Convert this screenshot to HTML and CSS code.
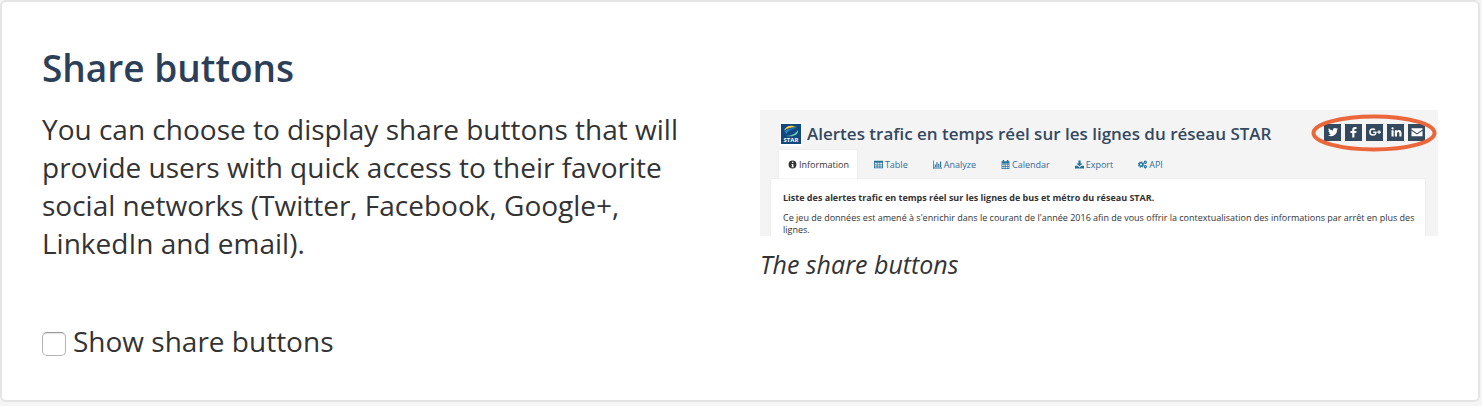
FILE: index.html
```html
<!DOCTYPE html>
<html lang="en">
<head>
<meta charset="utf-8">
<title>Share buttons</title>
<link rel="stylesheet" href="styles.css">
</head>
<body>
<main class="card">
  <section class="intro">
    <h2 class="heading">Share buttons</h2>
    <p class="description">You can choose to display share buttons that will provide users with quick access to their favorite social networks (Twitter, Facebook, Google+, LinkedIn and email).</p>
    <label class="option"><input class="checkbox" type="checkbox"><span>Show share buttons</span></label>
  </section>
  <figure class="example">
    <div class="preview" lang="fr">
      <header class="preview-header">
        <svg class="logo" viewBox="0 0 22 24" aria-hidden="true">
          <rect width="22" height="24" fill="#fff"/>
          <rect x="1" y="2" width="20" height="20" fill="#104880"/>
          <path d="M4 8.500C6 3.500 11 2.500 17 5.500C12 5 8.500 5.800 4 8.500Z" fill="#f5c94c"/>
          <path d="M4.500 9.500C7 6.300 12 5.800 16.500 6.300C11 7.300 8 8.500 6.500 12Z" fill="#2d86bd"/>
          <path d="M18 8C19 12 14 15.500 6 14C12 13.600 16 11.500 18 8Z" fill="#71c9ae"/>
          <text class="logo-text" x="11" y="20" text-anchor="middle">STAR</text>
        </svg>
        <h3 class="preview-title">Alertes trafic en temps réel sur les lignes du réseau STAR</h3>
        <div class="share">
          <button class="share-button" type="button" aria-label="Twitter"><svg viewBox="0 0 24 24"><path d="M22 5.800c-.8.400-1.600.6-2.400.7.900-.5 1.500-1.300 1.800-2.300-.8.500-1.700.8-2.600 1A4.100 4.100 0 0 0 11.800 9C8.400 8.800 5.400 7.200 3.400 4.700a4.100 4.100 0 0 0 1.300 5.500c-.7 0-1.300-.2-1.900-.5 0 2 1.400 3.700 3.300 4.100-.6.200-1.200.2-1.900.1.500 1.600 2 2.800 3.900 2.800A8.300 8.300 0 0 1 2 18.400 11.700 11.700 0 0 0 20 8c.8-.6 1.500-1.300 2-2.200Z"/></svg></button>
          <button class="share-button" type="button" aria-label="Facebook"><svg viewBox="0 0 24 24"><path d="M17 2v4h-2.500c-1.400 0-1.700.7-1.700 1.800V10H17l-.6 4h-3.600v9H8.500v-9H5v-4h3.500V7c0-3.400 2-5.200 5-5.200 1.500 0 2.900.1 3.500.2Z"/></svg></button>
          <button class="share-button" type="button" aria-label="Google+"><svg viewBox="0 0 24 24"><path d="M8 4.500c2 0 3.700.7 5 1.900L10.900 8.500A4.200 4.200 0 0 0 8 7.400 4.600 4.600 0 0 0 8 16.700c2.900 0 4-2 4.200-3.100H8v-2.800h7.200c.6 4.300-1.800 8.900-7.200 8.900A7.600 7.600 0 0 1 8 4.500ZM19 8.500h2.300V11H24v2.300h-2.700V16H19v-2.700h-2.600V11H19Z"/></svg></button>
          <button class="share-button" type="button" aria-label="LinkedIn"><svg viewBox="0 0 24 24"><path d="M3 8.500h4.300V21H3ZM5.200 2.500a2.200 2.200 0 1 1 0 4.500 2.200 2.200 0 0 1 0-4.500ZM9.700 8.500h4.100v1.900c.8-1.300 2-2.200 4-2.200 3 0 5.200 2 5.200 6V21h-4.300v-6.400c0-1.700-.6-2.800-2.100-2.800-1.800 0-2.500 1.300-2.500 2.900V21H9.700Z"/></svg></button>
          <button class="share-button" type="button" aria-label="Email"><svg viewBox="0 0 24 24"><path d="M1 4.500h22v2.300L12 14.500 1 6.800ZM1 9.300l11 7.700 11-7.700v11H1Z"/></svg></button>
          <svg class="highlight" viewBox="0 0 126 38" aria-hidden="true"><ellipse cx="63" cy="19" rx="60.500" ry="16.500" fill="none" stroke="#eb673b" stroke-width="4"/></svg>
        </div>
      </header>
      <nav class="tabs">
        <a class="tab tab-active" href="#information"><svg viewBox="0 0 16 16"><path fill-rule="evenodd" d="M8 1a7 7 0 1 1 0 14A7 7 0 0 1 8 1ZM7 3v2.500h2.500V3ZM6 7v1.500h1V11.500H6V13h4.500v-1.500h-1V7Z"/></svg>Information</a>
        <a class="tab" href="#table"><svg viewBox="0 0 16 16"><path fill-rule="evenodd" d="M0 1.500h16v13H0ZM1.500 5v2h3.500V5ZM6.300 5v2h3.500V5ZM11 5v2h3.500V5ZM1.500 8.200v2h3.500v-2ZM6.300 8.200v2h3.500v-2ZM11 8.200v2h3.500v-2ZM1.500 11.400v1.800h3.500v-1.800ZM6.300 11.400v1.800h3.500v-1.800ZM11 11.400v1.800h3.500v-1.800Z"/></svg>Table</a>
        <a class="tab" href="#analyze"><svg viewBox="0 0 16 16"><path d="M0 1h1.300v12.500H16V15H0ZM3 8h2v4.500H3ZM6 4h2v8.500H6ZM9.300 6.500h2v6h-2ZM12.500 2.500h2v10h-2Z"/></svg>Analyze</a>
        <a class="tab" href="#calendar"><svg viewBox="0 0 16 16"><path fill-rule="evenodd" d="M1 2h2V0h2.500v2h5V0H13v2h2v14H1ZM2.200 6v2h2.500V6ZM5.700 6v2h2V6ZM8.700 6v2h2V6ZM11.700 6v2h2V6ZM2.200 9v2.200h2.500V9ZM5.700 9v2.200h2V9ZM8.700 9v2.200h2V9ZM11.700 9v2.200h2V9ZM2.200 12.300v2.200h2.500v-2.200ZM5.700 12.300v2.200h2v-2.200ZM8.700 12.300v2.200h2v-2.200ZM11.700 12.300v2.200h2v-2.200Z"/></svg>Calendar</a>
        <a class="tab" href="#export"><svg viewBox="0 0 16 16"><path d="M6 1h4v5h3.500L8 11.300 2.500 6H6ZM0 10h4.500L8 13.200 11.500 10H16v5H0Z"/></svg>Export</a>
        <a class="tab" href="#api"><svg viewBox="0 0 16 16"><g fill="none" stroke="#24729f"><circle cx="5.300" cy="8" r="3.200" stroke-width="2.600"/><circle cx="5.300" cy="8" r="4.800" stroke-width="1.800" stroke-dasharray="1.885 1.885"/><circle cx="13" cy="4" r="1.900" stroke-width="2"/><circle cx="13" cy="12" r="1.900" stroke-width="2"/></g></svg>API</a>
      </nav>
      <div class="panel">
        <p class="panel-lead">Liste des alertes trafic en temps réel sur les lignes de bus et métro du réseau STAR.</p>
        <p class="panel-text">Ce jeu de données est amené à s'enrichir dans le courant de l'année 2016 afin de vous offrir la contextualisation des informations par arrêt en plus des lignes.</p>
      </div>
    </div>
    <figcaption class="caption">The share buttons</figcaption>
  </figure>
</main>
</body>
</html>
```
FILE: styles.css
```css
* {
  box-sizing: border-box;
}

body {
  margin: 0;
  padding-right: 2px;
  background: #f5f5f5;
  color: #333;
  font-family: "Open Sans", sans-serif;
  font-size: 28px;
  line-height: 38px;
}

h2, h3, p, figure {
  margin: 0;
}

.card {
  display: grid;
  grid-template-columns: 1fr 1fr;
  gap: 40px;
  padding: 40px;
  background: #fff;
  border: 2px solid #e5e5e5;
  border-radius: 6px;
}

.heading {
  margin-bottom: 16px;
  color: #2c3f59;
  font-size: 37px;
  font-weight: 600;
  line-height: 52px;
}

.option {
  display: flex;
  align-items: center;
  gap: 7px;
  margin-top: 60px;
}

.checkbox {
  appearance: none;
  width: 24px;
  height: 24px;
  margin: 6px 0 0;
  background: #fff;
  border: 1px solid #b4b4b4;
  border-top-color: #999;
  border-radius: 5px;
  box-shadow: inset 0 1px 1px #e5e5e5;
}

.checkbox:checked {
  background: #2c3f59;
}

.example {
  padding-top: 68px;
}

.preview {
  padding: 12px 13px 0 11px;
  overflow: hidden;
  background: #f4f4f4;
  font-size: 9px;
  line-height: 12px;
}

.preview-header {
  display: flex;
  align-items: center;
  padding-left: 9px;
}

.logo {
  flex: none;
  width: 22px;
  height: 24px;
}

.logo-text {
  fill: #fff;
  font-size: 6px;
  font-weight: 700;
}

.preview-title {
  margin-left: 5px;
  color: #34495e;
  font-size: 17px;
  font-weight: 600;
  line-height: 24px;
  white-space: nowrap;
}

.share {
  position: relative;
  display: flex;
  gap: 4px;
  margin: 0 0 4px auto;
}

.share-button {
  display: grid;
  place-items: center;
  width: 17px;
  height: 17px;
  padding: 0;
  background: #34495e;
  border: 0;
}

.share-button svg {
  width: 12px;
  height: 12px;
  fill: #fff;
}

.highlight {
  position: absolute;
  top: -10px;
  right: -12px;
  width: 126px;
  height: 38px;
  pointer-events: none;
}

.tabs {
  display: flex;
  gap: 8px;
  padding: 4px 0 0 8px;
}

.tab {
  display: flex;
  align-items: center;
  gap: 2px;
  padding: 8px 8px 8px 9px;
  color: #336c99;
  line-height: 13px;
  text-decoration: none;
}

.tab svg {
  width: 9px;
  height: 9px;
  fill: #24729f;
}

.tab-active {
  background: #fff;
  color: #333;
  box-shadow: 0 0 1px #ccc;
}

.tab-active svg {
  fill: #333;
}

.panel {
  position: relative;
  padding: 13px 2px 0 12px;
  background: #fff;
  box-shadow: 0 0 1px #ccc;
}

.panel-lead {
  margin-bottom: 8px;
  font-weight: 700;
}

.caption {
  margin-top: 9px;
  font-size: 25px;
  font-style: italic;
}
```
